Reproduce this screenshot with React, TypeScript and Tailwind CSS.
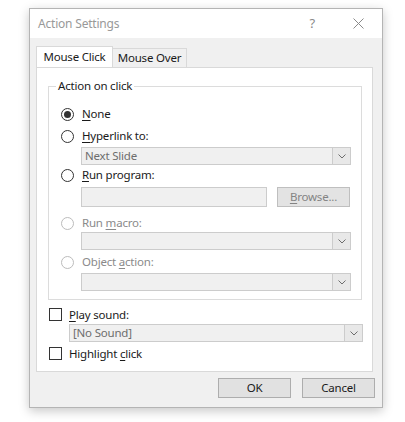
import React from "react";

const font = { fontFamily: '"Noto Sans", "Open Sans", sans-serif' };

function Radio({ checked, disabled }: { checked?: boolean; disabled?: boolean }) {
  return (
    <span
      className={`flex h-[13px] w-[13px] shrink-0 items-center justify-center rounded-full border bg-white ${
        disabled ? "border-[#bcbcbc]" : "border-[#333333]"
      }`}
    >
      {checked && <span className="h-[7px] w-[7px] rounded-full bg-[#333333]" />}
    </span>
  );
}

function Check() {
  return <span className="h-[13px] w-[13px] shrink-0 border border-[#333333] bg-white" />;
}

function Chevron() {
  return (
    <svg width="8" height="5" viewBox="0 0 8 5">
      <path d="M0.5 0.5 L4 4 L7.5 0.5" fill="none" stroke="#6d6d6d" strokeWidth="1" />
    </svg>
  );
}

function Combo({ text, className }: { text?: string; className: string }) {
  return (
    <div className={`flex h-[18px] items-stretch border border-[#cccccc] bg-[#f0f0f0] ${className}`}>
      <div className="flex flex-1 items-center pl-[3px] leading-none text-[#6d6d6d]">{text}</div>
      <div className="flex w-[18px] items-center justify-center border-l border-[#cccccc] bg-[#e8e8e8]">
        <Chevron />
      </div>
    </div>
  );
}

function U({ children }: { children: React.ReactNode }) {
  return <span className="underline decoration-1 underline-offset-2">{children}</span>;
}

export default function App() {
  return (
    <div
      className="h-[422px] w-[405px] bg-white pl-[29px] pt-[8px] text-[11.5px] tracking-[-0.2px] text-[#1a1a1a]"
      style={font}
    >
      <div className="flex h-[400px] w-[354px] flex-col border border-[#b4b4b4] bg-[#f0f0f0] shadow-[0_3px_10px_rgba(0,0,0,0.22)]">
        {/* title bar */}
        <div className="flex h-[29px] shrink-0 items-center bg-white">
          <span className="ml-[8px] text-[12px] text-[#999999]">Action Settings</span>
          <span className="ml-auto mr-[38px] text-[13px] text-[#8a8a8a]">?</span>
          <svg className="mr-[18px]" width="11" height="11" viewBox="0 0 11 11">
            <path d="M0.5 0.5 L10.5 10.5 M10.5 0.5 L0.5 10.5" stroke="#8a8a8a" strokeWidth="1" />
          </svg>
        </div>

        {/* tabs */}
        <div className="ml-[6px] mt-[9px] flex h-[20px] items-end">
          <div className="relative z-10 flex h-[21px] w-[77px] items-center justify-center border border-b-0 border-[#d9d9d9] bg-white">
            Mouse Click
          </div>
          <div className="flex h-[19px] w-[74px] items-center justify-center border border-b-0 border-l-0 border-[#d9d9d9] bg-[#f0f0f0]">
            Mouse Over
          </div>
        </div>

        {/* panel */}
        <div className="ml-[6px] flex h-[305px] w-[337px] flex-col border border-[#d9d9d9] bg-white">
          {/* group box */}
          <div className="relative ml-[11px] mt-[18px] h-[214px] w-[314px] border border-[#dcdcdc]">
            <span className="absolute left-[7px] top-[-9px] bg-white px-[2px] leading-[16px]">Action on click</span>
            <div className="flex flex-col pl-[12px]">
              <div className="mt-[19px] flex h-[16px] items-center gap-[8px]">
                <Radio checked />
                <span><U>N</U>one</span>
              </div>
              <div className="mt-[6px] flex h-[16px] items-center gap-[8px]">
                <Radio />
                <span><U>H</U>yperlink to:</span>
              </div>
              <Combo text="Next Slide" className="ml-[20px] mt-[3px] w-[270px]" />
              <div className="mt-[2px] flex h-[16px] items-center gap-[8px]">
                <Radio />
                <span><U>R</U>un program:</span>
              </div>
              <div className="ml-[20px] mt-[4px] flex h-[20px] gap-[10px]">
                <div className="w-[186px] border border-[#cccccc] bg-[#f0f0f0]" />
                <div className="flex w-[73px] items-center justify-center border border-[#bfbfbf] bg-[#e3e3e3] text-[#838383]">
                  <span><U>B</U>rowse...</span>
                </div>
              </div>
              <div className="mt-[8px] flex h-[16px] items-center gap-[8px] text-[#8a8a8a]">
                <Radio disabled />
                <span>Run <U>m</U>acro:</span>
              </div>
              <Combo className="ml-[20px] mt-[1px] w-[270px]" />
              <div className="mt-[4px] flex h-[16px] items-center gap-[8px] text-[#8a8a8a]">
                <Radio disabled />
                <span>Object <U>a</U>ction:</span>
              </div>
              <Combo className="ml-[20px] mt-[3px] w-[270px]" />
            </div>
          </div>

          {/* play sound */}
          <div className="ml-[12px] mt-[8px] flex h-[13px] items-center gap-[7px]">
            <Check />
            <span><U>P</U>lay sound:</span>
          </div>
          <Combo text="[No Sound]" className="ml-[32px] mt-[3px] w-[294px]" />
          <div className="ml-[12px] mt-[5px] flex h-[13px] items-center gap-[7px]">
            <Check />
            <span>Highlight <U>c</U>lick</span>
          </div>
        </div>

        {/* buttons */}
        <div className="mt-[6px] flex justify-end gap-[11px] pr-[7px]">
          <div className="flex h-[20px] w-[73px] items-center justify-center border border-[#adadad] bg-[#e1e1e1]">OK</div>
          <div className="flex h-[20px] w-[73px] items-center justify-center border border-[#adadad] bg-[#e1e1e1]">Cancel</div>
        </div>
      </div>
    </div>
  );
}
